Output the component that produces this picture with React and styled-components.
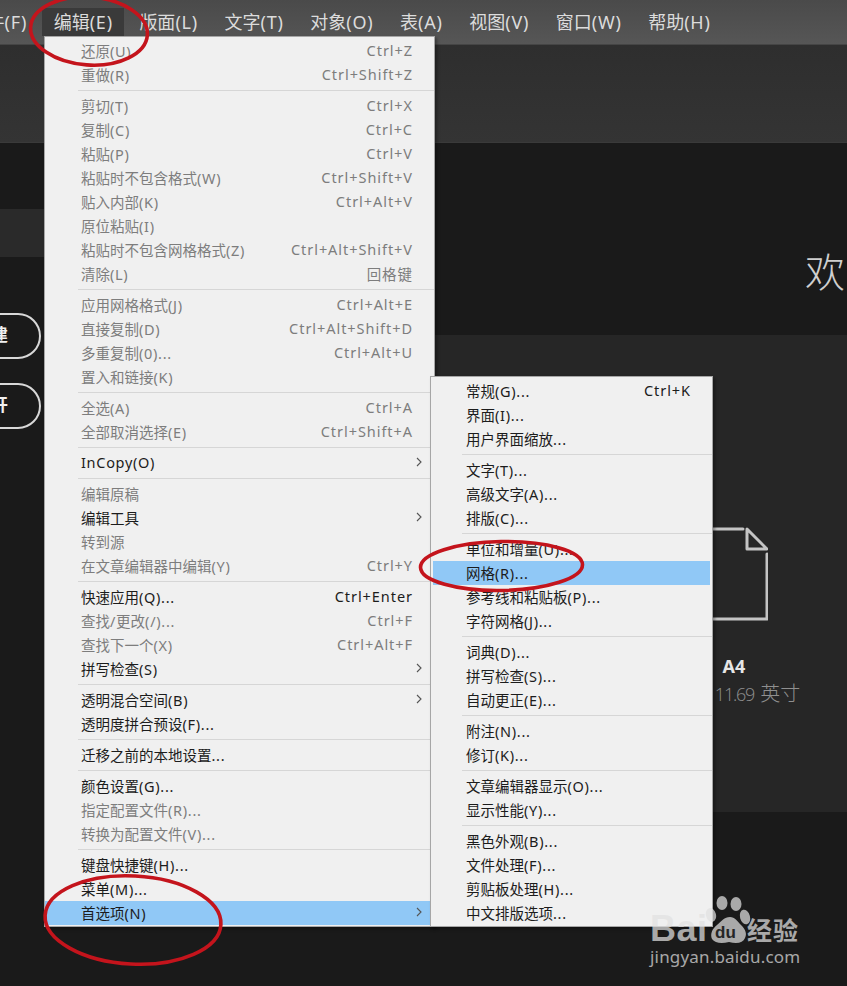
import React from "react";
import styled, { createGlobalStyle } from "styled-components";

const Global = createGlobalStyle`
  html, body { margin: 0; padding: 0; background: #1a1a1a; }
  body { font-family: "Noto Sans", "Noto Sans CJK SC", sans-serif; }
  * { box-sizing: border-box; }
`;

const Page = styled.div`
  position: relative;
  width: 847px;
  height: 986px;
  overflow: hidden;
  display: flex;
  flex-direction: column;
  background: #1a1a1a;
`;

const MenuBar = styled.div`
  flex: none;
  height: 45px;
  display: flex;
  align-items: flex-start;
  gap: 3.5px;
  padding-top: 8px;
  margin-left: -42.9px;
  width: 890px;
  background: linear-gradient(#4a4a4a, #565656);
  border-bottom: 1px solid #454545;
`;

const BarItem = styled.div`
  height: 28px;
  padding: 0 11.5px;
  line-height: 28px;
  font-size: 18px;
  white-space: nowrap;
  color: #dcdcdc;
  background: ${(p) => (p.$open ? "#3a3a3a" : "transparent")};
`;

const Toolbar = styled.div`
  flex: none;
  height: 98px;
  background: linear-gradient(#2e2e2e, #343434);
  border-bottom: 1px solid #3a3a3a;
`;

const Workspace = styled.div`
  flex: 1;
  display: flex;
  min-height: 0;
`;

const Sidebar = styled.aside`
  flex: none;
  width: 200px;
  padding-top: 66px;
  display: flex;
  flex-direction: column;
  overflow: hidden;
`;

const SideBand = styled.div`
  height: 48px;
  background: #2a2a2a;
  margin-bottom: 56px;
`;

const PillStack = styled.div`
  display: flex;
  flex-direction: column;
  gap: 24px;
`;

const Pill = styled.div`
  width: 100px;
  height: 46px;
  margin-left: -59px;
  border: 2.5px solid #d8d8d8;
  border-radius: 23px;
  color: #f0f0f0;
  font-size: 17px;
  font-weight: 700;
  line-height: 40px;
  text-align: center;
`;

const Main = styled.main`
  flex: 1;
  min-width: 0;
  display: flex;
  flex-direction: column;
`;

const Greeting = styled.div`
  flex: none;
  height: 192px;
  padding: 97px 0 0 605px;
  font-size: 40px;
  line-height: 60px;
  font-weight: 300;
  color: #cfcfcf;
  font-family: "Noto Sans CJK SC", sans-serif;
`;

const Panel = styled.section`
  flex: none;
  height: 477px;
  background: #262626;
  display: flex;
  justify-content: flex-end;
  padding: 191px 33px 0 0;
`;

const Card = styled.div`
  width: 160px;
  display: flex;
  flex-direction: column;
  align-items: center;
`;

const DocIcon = styled.svg`
  display: block;
  width: 68px;
  height: 96px;
  fill: none;
  stroke: #c4c4c4;
  stroke-width: 3;
  stroke-linejoin: round;
  stroke-linecap: round;
`;

const CardName = styled.div`
  margin-top: 32px;
  font-size: 18px;
  line-height: 24px;
  font-weight: 700;
  color: #e6e6e6;
`;

const CardSize = styled.div`
  margin: 2px 0 0 2px;
  line-height: 26px;
  white-space: nowrap;
  color: #8f8f8f;
  font-family: "Open Sans", "Noto Sans CJK SC", sans-serif;
  font-weight: 300;
`;

const SizeNum = styled.span`
  font-size: 18px;
  letter-spacing: -1.2px;
`;

const SizeUnit = styled.span`
  margin-left: 6px;
  font-size: 20px;
  font-family: "Noto Sans CJK SC", sans-serif;
`;

const Menu = styled.div`
  position: absolute;
  left: ${(p) => p.$left}px;
  top: ${(p) => p.$top}px;
  width: ${(p) => p.$width}px;
  padding: ${(p) => p.$pad};
  background: #f0f0f0;
  border: 1px solid #a6a6a6;
  box-shadow: 2px 2px 3px rgba(0, 0, 0, 0.35);
`;

const Row = styled.div`
  display: flex;
  align-items: center;
  justify-content: space-between;
  height: 24px;
  margin: ${(p) => (p.$sub ? "0 2px" : "0")};
  padding: ${(p) => (p.$sub ? "0 20px 2px 33px" : "0 22px 2px 36px")};
  font-size: 14.5px;
  white-space: nowrap;
  color: ${(p) => (p.$off ? "#7d7d7d" : "#1c1c1c")};
  background: ${(p) => (p.$on ? "#90c8f6" : "transparent")};
`;

const Latin = styled.span`
  letter-spacing: ${(p) => p.$spacing}px;
`;

const Shortcut = styled.span`
  letter-spacing: 0.95px;
  margin-right: -1px;
`;

const Chevron = styled.svg`
  width: 6px;
  height: 10px;
  margin-right: -10px;
  fill: none;
  stroke: #555;
  stroke-width: 1.1;
`;

const Sep = styled.div`
  height: 1px;
  margin: 3px 0 3px ${(p) => (p.$sub ? 31 : 33)}px;
  background: #d6d6d6;
`;

const Marks = styled.svg`
  position: absolute;
  left: 0;
  top: 0;
  width: 847px;
  height: 986px;
  pointer-events: none;
  fill: none;
  stroke: #c4141c;
  stroke-width: 3.6;
`;

const Watermark = styled.div`
  position: absolute;
  left: 650px;
  top: 896px;
  width: 160px;
  height: 76px;
  color: rgba(225, 225, 225, 0.72);
`;

const LogoRow = styled.div`
  position: absolute;
  left: 0;
  top: 16px;
  display: flex;
  align-items: center;
  line-height: 34px;
  font-weight: 700;
`;

const LogoBai = styled.span`
  font-size: 36px;
  letter-spacing: 0.5px;
  font-family: "Liberation Sans", sans-serif;
  width: 97px;
`;

const LogoCn = styled.span`
  font-size: 25px;
  letter-spacing: 1px;
  font-family: "Noto Sans CJK SC", sans-serif;
`;

const Paw = styled.svg`
  position: absolute;
  left: 55px;
  top: 0;
  width: 48px;
  height: 52px;
  fill: rgba(225, 225, 225, 0.72);
`;

const PawDu = styled.span`
  position: absolute;
  left: 65px;
  top: 27px;
  font-size: 17px;
  line-height: 20px;
  font-weight: 700;
  color: #262626;
  font-family: "Liberation Sans", sans-serif;
`;

const LogoUrl = styled.div`
  position: absolute;
  left: 0;
  top: 49px;
  font-size: 17px;
  line-height: 24px;
  letter-spacing: 0.18px;
  white-space: nowrap;
`;

const barItems = ["文件(F)", "编辑(E)", "版面(L)", "文字(T)", "对象(O)", "表(A)", "视图(V)", "窗口(W)", "帮助(H)"];

const editMenu = [
  ["还原(U)", "Ctrl+Z", 1],
  ["重做(R)", "Ctrl+Shift+Z", 1],
  0,
  ["剪切(T)", "Ctrl+X", 1],
  ["复制(C)", "Ctrl+C", 1],
  ["粘贴(P)", "Ctrl+V", 1],
  ["粘贴时不包含格式(W)", "Ctrl+Shift+V", 1],
  ["贴入内部(K)", "Ctrl+Alt+V", 1],
  ["原位粘贴(I)", "", 1],
  ["粘贴时不包含网格格式(Z)", "Ctrl+Alt+Shift+V", 1],
  ["清除(L)", "回格键", 1],
  0,
  ["应用网格格式(J)", "Ctrl+Alt+E", 1],
  ["直接复制(D)", "Ctrl+Alt+Shift+D", 1],
  ["多重复制(0)...", "Ctrl+Alt+U", 1],
  ["置入和链接(K)", "", 1],
  0,
  ["全选(A)", "Ctrl+A", 1],
  ["全部取消选择(E)", "Ctrl+Shift+A", 1],
  0,
  ["InCopy(O)", ">", 0],
  0,
  ["编辑原稿", "", 1],
  ["编辑工具", ">", 0],
  ["转到源", "", 1],
  ["在文章编辑器中编辑(Y)", "Ctrl+Y", 1],
  0,
  ["快速应用(Q)...", "Ctrl+Enter", 0],
  ["查找/更改(/)...", "Ctrl+F", 1],
  ["查找下一个(X)", "Ctrl+Alt+F", 1],
  ["拼写检查(S)", ">", 0],
  0,
  ["透明混合空间(B)", ">", 0],
  ["透明度拼合预设(F)...", "", 0],
  0,
  ["迁移之前的本地设置...", "", 0],
  0,
  ["颜色设置(G)...", "", 0],
  ["指定配置文件(R)...", "", 1],
  ["转换为配置文件(V)...", "", 1],
  0,
  ["键盘快捷键(H)...", "", 0],
  ["菜单(M)...", "", 0],
  ["首选项(N)", ">", 0, 1],
];

const prefMenu = [
  ["常规(G)...", "Ctrl+K", 0],
  ["界面(I)...", "", 0],
  ["用户界面缩放...", "", 0],
  0,
  ["文字(T)...", "", 0],
  ["高级文字(A)...", "", 0],
  ["排版(C)...", "", 0],
  0,
  ["单位和增量(U)...", "", 0],
  ["网格(R)...", "", 0, 1],
  ["参考线和粘贴板(P)...", "", 0],
  ["字符网格(J)...", "", 0],
  0,
  ["词典(D)...", "", 0],
  ["拼写检查(S)...", "", 0],
  ["自动更正(E)...", "", 0],
  0,
  ["附注(N)...", "", 0],
  ["修订(K)...", "", 0],
  0,
  ["文章编辑器显示(O)...", "", 0],
  ["显示性能(Y)...", "", 0],
  0,
  ["黑色外观(B)...", "", 0],
  ["文件处理(F)...", "", 0],
  ["剪贴板处理(H)...", "", 0],
  ["中文排版选项...", "", 0],
];

function Label({ text, spacing = 0.7 }) {
  const parts = text.split(/([\x00-\x7f]+)/).filter(Boolean);
  return (
    <span>
      {parts.map((part, i) =>
        /^[\x00-\x7f]/.test(part) ? <Latin key={i} $spacing={spacing}>{part}</Latin> : part
      )}
    </span>
  );
}

function MenuRows({ items, sub }) {
  return items.map((item, i) => {
    if (!item) return <Sep key={i} $sub={sub} />;
    const [label, right, off, on] = item;
    return (
      <Row key={i} $sub={sub} $off={!!off} $on={!!on}>
        <Label text={label} />
        {right === ">" ? (
          <Chevron viewBox="0 0 6 10">
            <path d="M1 1l4 4-4 4" />
          </Chevron>
        ) : (
          right && <Shortcut>{right}</Shortcut>
        )}
      </Row>
    );
  });
}

export default function App() {
  return (
    <Page>
      <Global />
      <MenuBar>
        {barItems.map((t, i) => (
          <BarItem key={t} $open={i === 1}>
            <Label text={t} spacing={0.8} />
          </BarItem>
        ))}
      </MenuBar>
      <Toolbar />
      <Workspace>
        <Sidebar>
          <SideBand />
          <PillStack>
            <Pill>新建</Pill>
            <Pill>打开</Pill>
          </PillStack>
        </Sidebar>
        <Main>
          <Greeting>欢</Greeting>
          <Panel>
            <Card>
              <DocIcon viewBox="0 0 68 96">
                <path d="M43 3H4v90h63V28" />
                <path d="M47 3l20 20H47z" />
              </DocIcon>
              <CardName>A4</CardName>
              <CardSize>
                <SizeNum>8.27 x 11.69</SizeNum>
                <SizeUnit>英寸</SizeUnit>
              </CardSize>
            </Card>
          </Panel>
        </Main>
      </Workspace>

      <Menu $left={44} $top={36} $width={391} $pad="2px 0 1px 0">
        <MenuRows items={editMenu} />
      </Menu>
      <Menu $left={430} $top={376} $width={283} $pad="2px 0 1px 0">
        <MenuRows items={prefMenu} sub />
      </Menu>

      <Marks viewBox="0 0 847 986">
        <ellipse cx="89" cy="31" rx="58.5" ry="34" transform="rotate(4 89 31)" />
        <ellipse cx="501.5" cy="566" rx="81" ry="24.5" transform="rotate(-1 501 566)" />
        <ellipse cx="133" cy="920" rx="88" ry="44" transform="rotate(3 133 920)" />
      </Marks>

      <Watermark>
        <LogoRow>
          <LogoBai>Bai</LogoBai>
          <LogoCn>经验</LogoCn>
        </LogoRow>
        <Paw viewBox="0 0 48 52">
          <ellipse cx="6" cy="19" rx="5" ry="7" transform="rotate(-15 6 19)" />
          <ellipse cx="17" cy="7" rx="5.5" ry="7" />
          <ellipse cx="31" cy="8" rx="5.5" ry="7" />
          <ellipse cx="40" cy="21" rx="5" ry="7.5" transform="rotate(-15 40 21)" />
          <path d="M25 21c5 0 7 4 11 8 5 5 6 9 4 13-2 5-8 6-16 4-8 2-14 1-17-3-2-5 0-10 5-14 5-4 7-8 13-8z" />
        </Paw>
        <PawDu>du</PawDu>
        <LogoUrl>jingyan.baidu.com</LogoUrl>
      </Watermark>
    </Page>
  );
}
